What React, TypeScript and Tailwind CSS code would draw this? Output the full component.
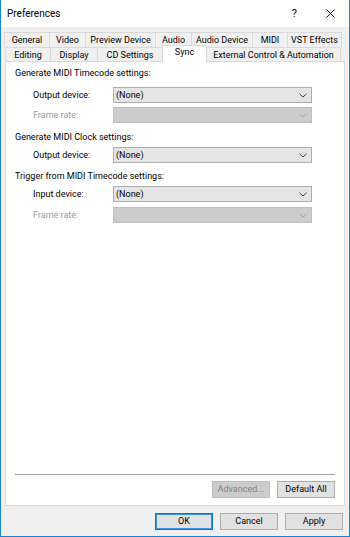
import React from "react";

const font = { fontFamily: 'Roboto, "Noto Sans", sans-serif' };

function Chevron({ disabled }: { disabled?: boolean }) {
  return (
    <svg width="8" height="5" viewBox="0 0 8 5" className="shrink-0 mr-[1px]">
      <polyline
        points="0.5,0.8 4,4 7.5,0.8"
        fill="none"
        stroke={disabled ? "#a6a6a6" : "#404040"}
        strokeWidth="1"
      />
    </svg>
  );
}

function Select({ value, disabled }: { value?: string; disabled?: boolean }) {
  return (
    <div
      className={
        "w-[199px] h-[16px] shrink-0 flex items-center justify-between pl-[2px] pr-[3px] border " +
        (disabled ? "bg-[#cccccc] border-[#bfbfbf]" : "bg-[#e5e5e5] border-[#adadad]")
      }
    >
      <span className="text-[9px] leading-none text-black">{value ?? ""}</span>
      <Chevron disabled={disabled} />
    </div>
  );
}

function Row({ label, value, disabled, className }: { label: string; value?: string; disabled?: boolean; className?: string }) {
  return (
    <div className={"flex items-center " + (className ?? "")}>
      <span className={"w-[98px] shrink-0 pl-[18px] text-[9px] leading-none whitespace-nowrap " + (disabled ? "text-[#9b9b9b]" : "text-black")}>{label}</span>
      <Select value={value} disabled={disabled} />
    </div>
  );
}

function Tab({ label, w, selected }: { label: string; w: number; selected?: boolean }) {
  return (
    <div
      style={{ width: w }}
      className={
        "-ml-px flex items-center justify-center border border-b-0 text-[9px] leading-none whitespace-nowrap " +
        (selected
          ? "bg-white border-[#d9d9d9] h-[17px] -mt-[2px] relative z-10 pb-[3px]"
          : "bg-[#f0f0f0] border-[#d9d9d9] h-[15px]")
      }
    >
      {label}
    </div>
  );
}

function Button({ label, disabled, primary }: { label: string; disabled?: boolean; primary?: boolean }) {
  return (
    <div
      className={
        "flex items-center justify-center text-[9px] leading-none border " +
        (disabled
          ? "bg-[#cccccc] border-[#bfbfbf] text-[#838383]"
          : primary
          ? "bg-[#e1e1e1] border-[#0078d7] shadow-[inset_0_0_0_1px_#3d95dd] text-black"
          : "bg-[#e1e1e1] border-[#adadad] text-black")
      }
      style={{ width: 58, height: 17 }}
    >
      {label}
    </div>
  );
}

export default function App() {
  return (
    <div style={font} className="w-[350px] h-[537px] bg-[#f0f0f0] border-x border-b border-[#1883d7] flex flex-col text-black overflow-hidden">
      {/* Title bar */}
      <div className="h-[27px] bg-white flex items-center shrink-0">
        <span className="pl-[6px] text-[10px] leading-none">Preferences</span>
        <div className="flex-1" />
        <span className="text-[11px] leading-none mr-[29px]">?</span>
        <svg width="9" height="9" viewBox="0 0 9 9" className="mr-[14px]">
          <line x1="0.5" y1="0.5" x2="8.5" y2="8.5" stroke="#111" strokeWidth="1" />
          <line x1="8.5" y1="0.5" x2="0.5" y2="8.5" stroke="#111" strokeWidth="1" />
        </svg>
      </div>

      {/* Tabs */}
      <div className="pt-[5px] shrink-0">
        <div className="flex pl-[4px]">
          <Tab label="General" w={46} />
          <Tab label="Video" w={37} />
          <Tab label="Preview Device" w={71} />
          <Tab label="Audio" w={37} />
          <Tab label="Audio Device" w={62} />
          <Tab label="MIDI" w={36} />
          <Tab label="VST Effects" w={55} />
        </div>
        <div className="flex pl-[5px]">
          <Tab label="Editing" w={46} />
          <Tab label="Display" w={48} />
          <Tab label="CD Settings" w={66} />
          <Tab label="Sync" w={45} selected />
          <Tab label="External Control & Automation" w={135} />
        </div>
      </div>

      {/* Panel */}
      <div className="mx-[4px] -mt-px h-[445px] bg-white border border-[#d9d9d9] flex flex-col pl-[9px] pr-[9px]">
        <div className="pt-[6px] text-[9px] leading-[11px]">Generate MIDI Timecode settings:</div>
        <Row className="mt-[8px]" label="Output device:" value="(None)" />
        <Row className="mt-[4px]" label="Frame rate:" disabled />
        <div className="mt-[9px] text-[9px] leading-[11px]">Generate MIDI Clock settings:</div>
        <Row className="mt-[4px]" label="Output device:" value="(None)" />
        <div className="mt-[8px] text-[9px] leading-[11px]">Trigger from MIDI Timecode settings:</div>
        <Row className="mt-[4px]" label="Input device:" value="(None)" />
        <Row className="mt-[5px]" label="Frame rate:" disabled />
        <div className="flex-1" />
        <div className="h-px bg-[#a0a0a0] mb-[6px]" />
        <div className="flex justify-end gap-[7px] mb-[7px]">
          <Button label="Advanced..." disabled />
          <Button label="Default All" />
        </div>
      </div>

      {/* Bottom buttons */}
      <div className="flex justify-end gap-[7px] pr-[6px] mt-[7px]">
        <Button label="OK" primary />
        <Button label="Cancel" />
        <Button label="Apply" />
      </div>
    </div>
  );
}
